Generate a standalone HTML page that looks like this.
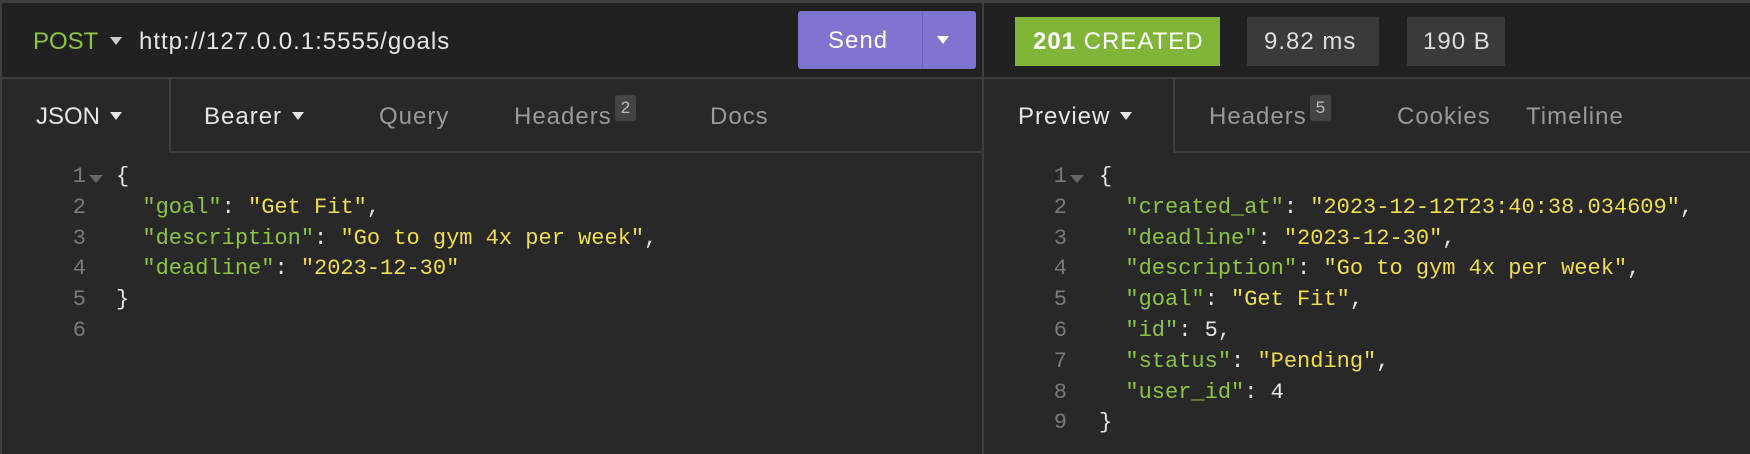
<!DOCTYPE html>
<html><head><meta charset="utf-8"><style>
*{margin:0;padding:0;box-sizing:border-box}
body{width:1750px;height:454px;background:#282828;position:relative;overflow:hidden;font-family:"Liberation Sans",sans-serif;}
.a{position:absolute}
.t{position:absolute;font-size:24px;line-height:30px;white-space:nowrap;letter-spacing:1px}
.caret{display:inline-block;width:0;height:0;border-left:6px solid transparent;border-right:6px solid transparent;border-top:8px solid currentColor;vertical-align:middle;margin-left:10px;position:relative;top:-2px}
.code{position:absolute;font-family:"Liberation Mono",monospace;font-size:22px;line-height:30.8px;white-space:pre;color:#e6e6e6}
.ln{position:absolute;font-family:"Liberation Mono",monospace;font-size:22px;line-height:30.8px;white-space:pre;color:#7a7a7a;text-align:right}
.k{color:#8cc63f}.s{color:#f0de4c}
.badge{display:inline-block;background:#444;color:#bbb;font-size:17px;line-height:26px;padding:0 6px;border-radius:3px;position:relative;top:-11px;margin-left:3px;letter-spacing:0}
</style></head><body>
<div class="a" style="left:0;top:0;width:1750px;height:3px;background:#3f3f3f"></div>
<div class="a" style="left:0;top:3px;width:1750px;height:74px;background:#212121"></div>
<div class="a" style="left:0;top:77px;width:1750px;height:2px;background:#3e3e3e"></div>
<div class="a" style="left:0;top:0;width:2px;height:454px;background:#3e3e3e"></div>
<div class="a" style="left:982px;top:3px;width:2px;height:451px;background:#3e3e3e"></div>

<div class="t" style="left:33px;top:27px;color:#8cc63f;letter-spacing:0">POST<span class="caret" style="color:#ccc;margin-left:12px"></span></div>
<div class="t" style="left:139px;top:27px;color:#e6e6e6">http://127.0.0.1:5555/goals</div>
<div class="a" style="left:798px;top:11px;width:178px;height:58px;background:#7f74cf;border-radius:3px"></div>
<div class="a" style="left:922px;top:11px;width:1px;height:58px;background:#6d63b8"></div>
<div class="t" style="left:828px;top:26px;color:#fff">Send</div>
<div class="t" style="left:932px;top:26px;color:#fff"><span class="caret" style="margin-left:5px"></span></div>

<div class="a" style="left:1015px;top:17px;width:205px;height:49px;background:#80b53a"></div>
<div class="t" style="left:1033px;top:27px;color:#fff"><b>201</b> CREATED</div>
<div class="a" style="left:1247px;top:17px;width:132px;height:49px;background:#3a3a3a"></div>
<div class="t" style="left:1264px;top:27px;color:#ddd">9.82 ms</div>
<div class="a" style="left:1407px;top:17px;width:98px;height:49px;background:#3a3a3a"></div>
<div class="t" style="left:1423px;top:27px;color:#ddd">190 B</div>

<div class="a" style="left:170px;top:151px;width:812px;height:2px;background:#3e3e3e"></div>
<div class="a" style="left:169px;top:79px;width:2px;height:74px;background:#3e3e3e"></div>
<div class="a" style="left:1174px;top:151px;width:576px;height:2px;background:#3e3e3e"></div>
<div class="a" style="left:1173px;top:79px;width:2px;height:74px;background:#3e3e3e"></div>

<div class="t" style="left:36px;top:102px;color:#e6e6e6;letter-spacing:0">JSON<span class="caret"></span></div>
<div class="t" style="left:204px;top:102px;color:#e6e6e6">Bearer<span class="caret"></span></div>
<div class="t" style="left:379px;top:102px;color:#999">Query</div>
<div class="t" style="left:514px;top:102px;color:#999">Headers<span class="badge">2</span></div>
<div class="t" style="left:710px;top:102px;color:#999">Docs</div>
<div class="t" style="left:1018px;top:102px;color:#e6e6e6">Preview<span class="caret"></span></div>
<div class="t" style="left:1209px;top:102px;color:#999">Headers<span class="badge">5</span></div>
<div class="t" style="left:1397px;top:102px;color:#999">Cookies</div>
<div class="t" style="left:1526px;top:102px;color:#999">Timeline</div>

<div class="ln" style="left:40px;top:162px;width:46px">1
2
3
4
5
6</div>
<div class="a" style="left:89px;top:175px;width:0;height:0;border-left:7px solid transparent;border-right:7px solid transparent;border-top:8px solid #666"></div>
<div class="code" style="left:116px;top:162px">{
  <span class="k">"goal"</span>: <span class="s">"Get Fit"</span>,
  <span class="k">"description"</span>: <span class="s">"Go to gym 4x per week"</span>,
  <span class="k">"deadline"</span>: <span class="s">"2023-12-30"</span>
}</div>

<div class="ln" style="left:1020px;top:162px;width:47px">1
2
3
4
5
6
7
8
9</div>
<div class="a" style="left:1070px;top:175px;width:0;height:0;border-left:7px solid transparent;border-right:7px solid transparent;border-top:8px solid #666"></div>
<div class="code" style="left:1099px;top:162px">{
  <span class="k">"created_at"</span>: <span class="s">"2023-12-12T23:40:38.034609"</span>,
  <span class="k">"deadline"</span>: <span class="s">"2023-12-30"</span>,
  <span class="k">"description"</span>: <span class="s">"Go to gym 4x per week"</span>,
  <span class="k">"goal"</span>: <span class="s">"Get Fit"</span>,
  <span class="k">"id"</span>: 5,
  <span class="k">"status"</span>: <span class="s">"Pending"</span>,
  <span class="k">"user_id"</span>: 4
}</div>
</body></html>
